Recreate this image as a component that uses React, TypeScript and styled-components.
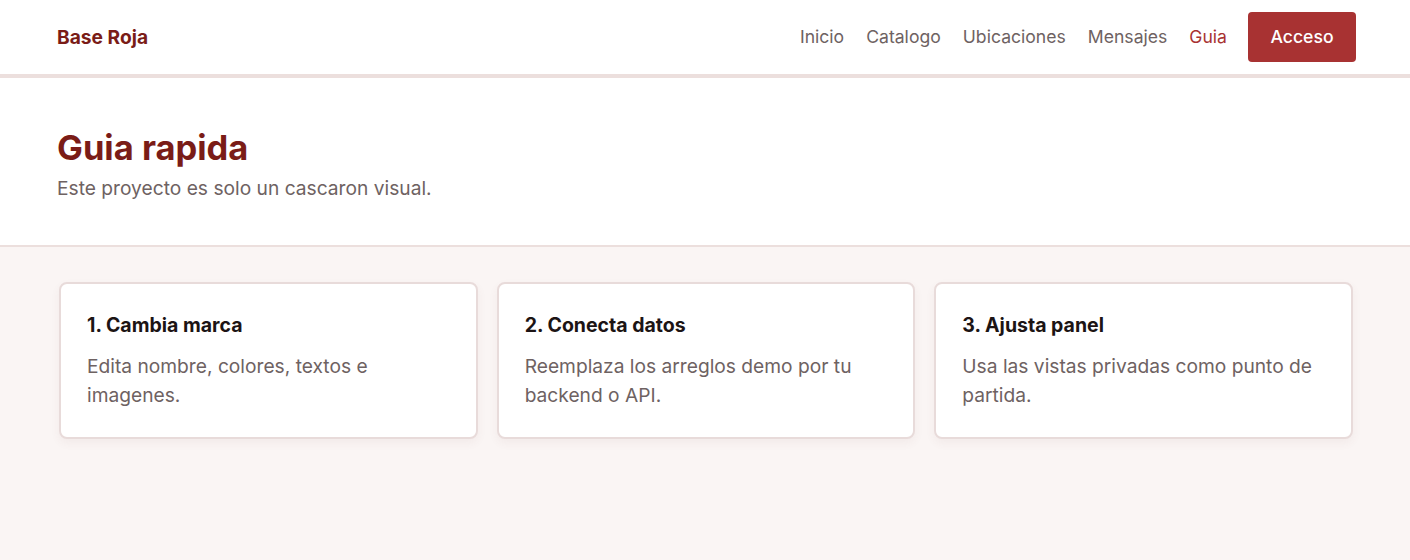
import * as React from 'react'
import styled, { createGlobalStyle } from 'styled-components'

const GlobalStyle = createGlobalStyle`
  body {
    margin: 0;
    font-family: Inter, 'Noto Sans', sans-serif;
    background: #faf5f4;
  }
  * { box-sizing: border-box; }
`

const colors = {
  brand: '#7a1c17',
  accent: '#a83232',
  muted: '#6e6262',
  border: '#ecdfdd',
}

const Header = styled.header`
  background: #fff;
  border-bottom: 4px solid ${colors.border};
`

const Container = styled.div`
  max-width: 1410px;
  margin: 0 auto;
  padding: 0 57px;
`

const HeaderInner = styled(Container)`
  display: flex;
  align-items: center;
  justify-content: space-between;
  height: 73px;
  margin-bottom: 1px;
  padding-right: 54px;
`

const Logo = styled.a`
  font-size: 19.2px;
  font-weight: 700;
  color: ${colors.brand};
  text-decoration: none;
`

const Nav = styled.nav`
  display: flex;
  align-items: center;
  gap: 22px;
`

const NavLink = styled.a<{ $active?: boolean }>`
  font-size: 17.6px;
  color: ${(p) => (p.$active ? colors.accent : colors.muted)};
  text-decoration: none;
`

const LoginButton = styled.button`
  margin-left: -1px;
  height: 50px;
  width: 108px;
  border: none;
  border-radius: 4px;
  background: ${colors.accent};
  color: #fff;
  font-family: inherit;
  font-size: 17.6px;
  font-weight: 500;
`

const Hero = styled.section`
  background: #fff;
  border-bottom: 2px solid ${colors.border};
  padding: 49px 0 42px;
`

const Title = styled.h1`
  margin: 0 0 6px;
  font-size: 34.5px;
  line-height: 1.2;
  font-weight: 700;
  color: ${colors.brand};
`

const Subtitle = styled.p`
  margin: 0;
  font-size: 19.2px;
  line-height: 1.5;
  color: ${colors.muted};
`

const Main = styled.main`
  padding: 35px 0 100px;
`

const Grid = styled.div`
  display: grid;
  grid-template-columns: repeat(3, 1fr);
  gap: 19px;
  margin: 0 0 0 2px;
`

const Card = styled.article`
  background: #fff;
  border: 2px solid #e8dbda;
  border-radius: 8px;
  padding: 29px 26px 27px;
  box-shadow: 0 4px 10px rgba(120, 60, 60, 0.06);
`

const CardTitle = styled.h2`
  margin: 0 0 13px;
  font-size: 19.5px;
  line-height: 1.3;
  font-weight: 700;
  color: #1c1414;
`

const CardText = styled.p`
  margin: 0;
  font-size: 19.2px;
  line-height: 29px;
  color: ${colors.muted};
`

const steps = [
  { title: '1. Cambia marca', text: 'Edita nombre, colores, textos e imagenes.' },
  { title: '2. Conecta datos', text: 'Reemplaza los arreglos demo por tu backend o API.' },
  { title: '3. Ajusta panel', text: 'Usa las vistas privadas como punto de partida.' },
]

const links = ['Inicio', 'Catalogo', 'Ubicaciones', 'Mensajes', 'Guia']

const App: React.FunctionComponent = () => (
  <>
    <GlobalStyle />
    <Header>
      <HeaderInner>
        <Logo href="#">Base Roja</Logo>
        <Nav>
          {links.map((l) => (
            <NavLink key={l} href="#" $active={l === 'Guia'}>
              {l}
            </NavLink>
          ))}
          <LoginButton>Acceso</LoginButton>
        </Nav>
      </HeaderInner>
    </Header>
    <Hero>
      <Container>
        <Title>Guia rapida</Title>
        <Subtitle>Este proyecto es solo un cascaron visual.</Subtitle>
      </Container>
    </Hero>
    <Main>
      <Container>
        <Grid>
          {steps.map((s) => (
            <Card key={s.title}>
              <CardTitle>{s.title}</CardTitle>
              <CardText>{s.text}</CardText>
            </Card>
          ))}
        </Grid>
      </Container>
    </Main>
  </>
)

export default App
